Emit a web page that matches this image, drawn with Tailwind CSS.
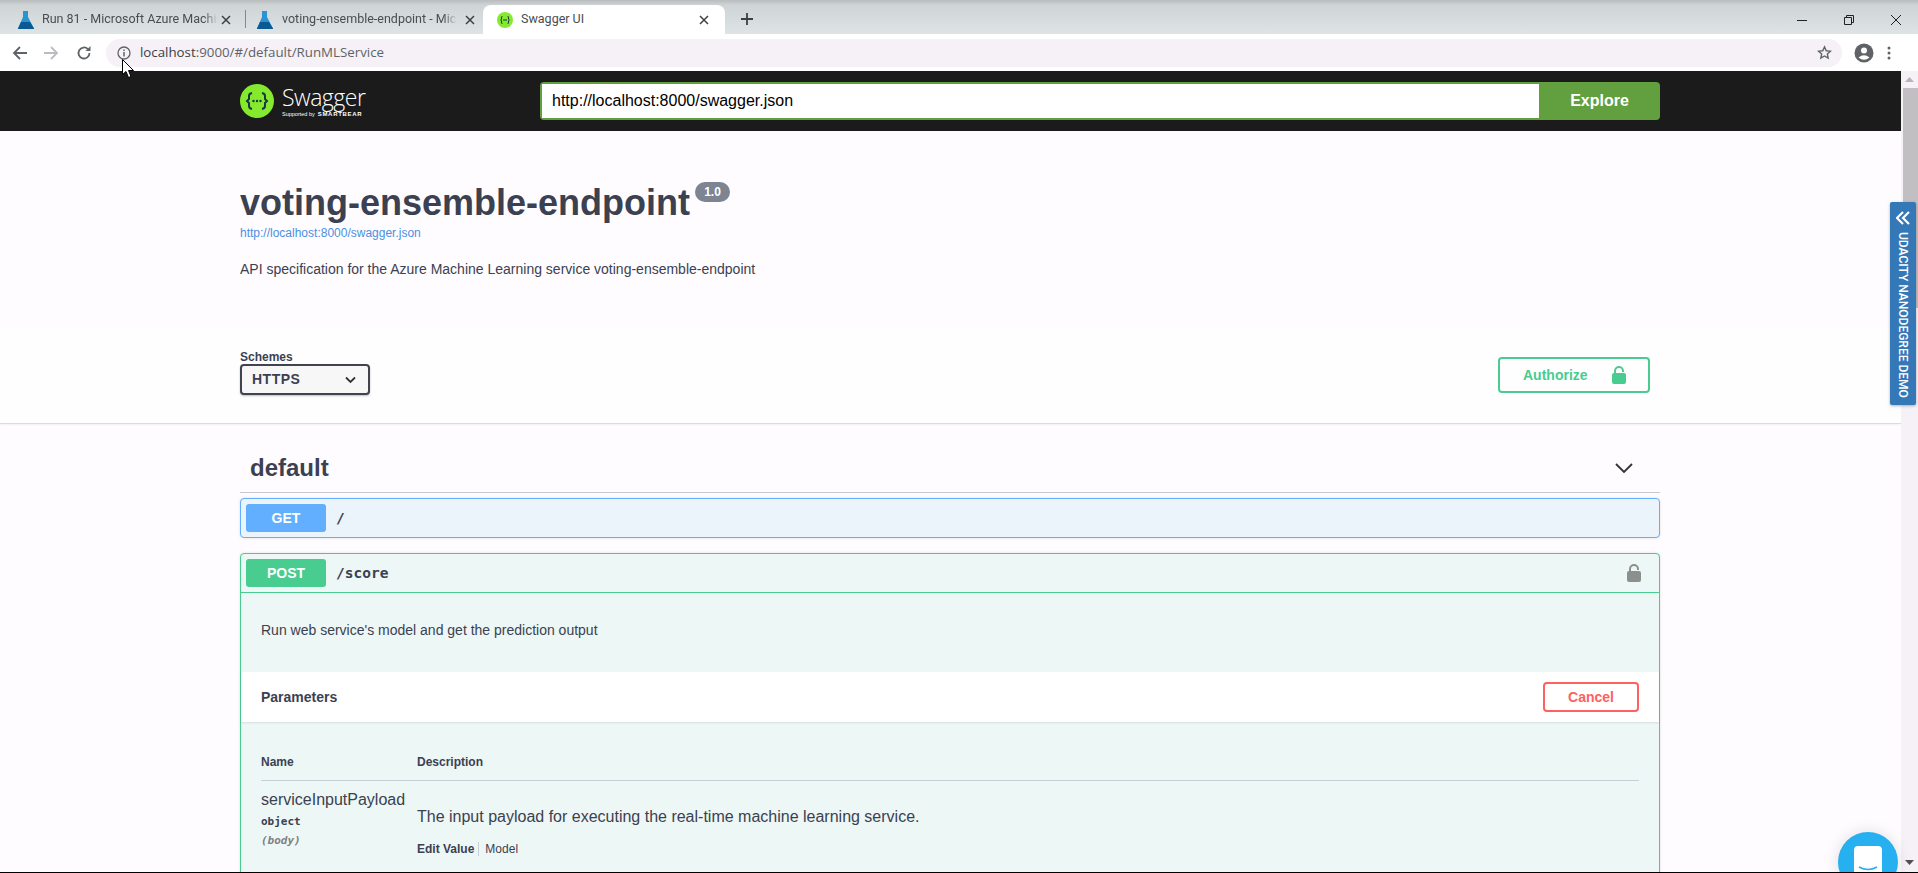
<!DOCTYPE html>
<html lang="en">

<head>
  <meta charset="UTF-8">
  <meta name="viewport" content="width=device-width, initial-scale=1.0">
  <title>Swagger UI</title>
  <script src="https://cdn.jsdelivr.net/npm/@tailwindcss/browser@4"></script>
</head>

<body class="relative h-[873px] w-[1918px] overflow-hidden bg-white font-['Liberation_Sans',Arial,sans-serif] text-[#3b4151]">

  <!-- browser tabs -->
  <div class="flex h-[34px] items-end bg-linear-to-b from-[#b9bcbd] from-0% via-[#cfd4d6] via-15% to-[#dee3e6] pl-[16px] font-['Roboto',sans-serif] text-[12.500px] text-[#4a4d51]">
    <div class="flex h-[29px] w-[229px] items-center">
      <svg class="h-[20px] w-[20px] shrink-0" viewBox="0 0 20 20"><path d="M7 1h5v6l6 11.500q.3.500-.3.500H2.300q-.6 0-.3-.5L7 7z" fill="#2a93d0"/><path d="M5 12h9l4 6.500q.2.500-.3.500H2.300q-.6 0-.3-.5z" fill="#0b5a94"/></svg>
      <span class="ml-[6px] w-[176px] whitespace-nowrap [mask-image:linear-gradient(to_right,black_92%,transparent)]">Run 81 - Microsoft Azure Machin</span>
      <svg class="ml-[3px] h-[10px] w-[10px] shrink-0" viewBox="0 0 10 10"><path d="M1 1l8 8M9 1l-8 8" stroke="#3c4043" stroke-width="1.500"/></svg>
    </div>
    <div class="mb-[6px] h-[18px] w-px bg-[#85888b]"></div>
    <div class="flex h-[29px] w-[237px] items-center pl-[9px]">
      <svg class="h-[20px] w-[20px] shrink-0" viewBox="0 0 20 20"><path d="M7 1h5v6l6 11.500q.3.500-.3.500H2.300q-.6 0-.3-.5L7 7z" fill="#2a93d0"/><path d="M5 12h9l4 6.500q.2.500-.3.500H2.300q-.6 0-.3-.5z" fill="#0b5a94"/></svg>
      <span class="ml-[7px] w-[175px] whitespace-nowrap [mask-image:linear-gradient(to_right,black_92%,transparent)]">voting-ensemble-endpoint - Mic</span>
      <svg class="ml-[8px] h-[10px] w-[10px] shrink-0" viewBox="0 0 10 10"><path d="M1 1l8 8M9 1l-8 8" stroke="#3c4043" stroke-width="1.500"/></svg>
    </div>
    <div class="flex h-[29px] w-[242px] items-center rounded-t-[8px] bg-white pl-[14px]">
      <svg class="h-[16px] w-[16px] shrink-0" viewBox="0 0 16 16"><circle cx="8" cy="8" r="8" fill="#85ea2d"/><path d="M5.500 4q-1 .5-1 2v1l-.8 1 .8 1v1q0 1.500 1 2M10.500 4q1 .5 1 2v1l.8 1-.8 1v1q0 1.500-1 2M6 8h4" fill="none" stroke="#173647" stroke-width="1"/></svg>
      <span class="ml-[8px] w-[178px] whitespace-nowrap">Swagger UI</span>
      <svg class="h-[10px] w-[10px] shrink-0" viewBox="0 0 10 10"><path d="M1 1l8 8M9 1l-8 8" stroke="#3c4043" stroke-width="1.500"/></svg>
    </div>
    <svg class="mb-[9px] ml-[16px] h-[12px] w-[12px]" viewBox="0 0 12 12"><path d="M6 0v12M0 6h12" stroke="#3c4043" stroke-width="1.800"/></svg>
    <div class="mb-[8px] ml-auto flex items-center gap-[35px] pr-[16px]">
      <svg class="h-[12px] w-[12px]" viewBox="0 0 12 12"><path d="M1 6.500h10" stroke="#222" stroke-width="1"/></svg>
      <svg class="h-[12px] w-[12px]" viewBox="0 0 12 12"><path d="M1.500 3.500h7v7h-7zM3.500 3.500v-2h7v7h-2" fill="none" stroke="#222" stroke-width="1"/></svg>
      <svg class="h-[12px] w-[12px]" viewBox="0 0 12 12"><path d="M1 1l10 10M11 1L1 11" stroke="#222" stroke-width="1"/></svg>
    </div>
  </div>

  <!-- browser toolbar -->
  <div class="flex h-[37px] items-center bg-white">
    <svg class="ml-[12px] h-[16px] w-[16px]" viewBox="0 0 16 16"><path d="M15 8H2M8 2L2 8l6 6" fill="none" stroke="#5f6368" stroke-width="1.800"/></svg>
    <svg class="ml-[15px] h-[16px] w-[16px]" viewBox="0 0 16 16"><path d="M1 8h13M8 2l6 6-6 6" fill="none" stroke="#b9bcc0" stroke-width="1.800"/></svg>
    <svg class="ml-[17px] h-[16px] w-[16px]" viewBox="0 0 16 16"><path d="M13.500 8a5.500 5.500 0 1 1-1.600-3.900" fill="none" stroke="#5f6368" stroke-width="1.800"/><path d="M14.500 1v5h-5z" fill="#5f6368"/></svg>
    <div class="ml-[14px] flex h-[28px] w-[1736px] items-center rounded-full bg-[#f5f1f6] pl-[11px] pr-[10px]">
      <svg class="h-[14px] w-[14px] shrink-0" viewBox="0 0 14 14"><circle cx="7" cy="7" r="6" fill="none" stroke="#5f6368" stroke-width="1.300"/><path d="M7 6v4.500M7 3.500v1.500" stroke="#5f6368" stroke-width="1.500"/></svg>
      <span class="ml-[9px] font-['Open_Sans',sans-serif] text-[13.300px] text-[#3d4043]">localhost<span class="text-[#5f6368]">:9000/#/default/RunMLService</span></span>
      <svg class="ml-auto h-[15px] w-[15px]" viewBox="0 0 24 24"><path d="M12 3l2.800 6.200 6.700.7-5 4.500 1.400 6.600L12 17.600 6.100 21l1.400-6.600-5-4.500 6.700-.7z" fill="none" stroke="#5f6368" stroke-width="2.200"/></svg>
    </div>
    <svg class="ml-[12px] h-[20px] w-[20px]" viewBox="0 0 20 20"><circle cx="10" cy="10" r="9.500" fill="#5f6368"/><circle cx="10" cy="7.500" r="3" fill="white"/><path d="M4.500 14.500q5.500-4.500 11 0-5.500 4.500-11 0z" fill="white"/></svg>
    <svg class="ml-[13px] h-[16px] w-[4px]" viewBox="0 0 4 16"><circle cx="2" cy="3" r="1.500" fill="#5f6368"/><circle cx="2" cy="8" r="1.500" fill="#5f6368"/><circle cx="2" cy="13" r="1.500" fill="#5f6368"/></svg>
  </div>

  <div class="flex h-[802px]">
    <!-- page -->
    <div class="h-[801px] w-[1901px] overflow-hidden bg-[#fffcff]">

      <!-- swagger topbar -->
      <div class="h-[60px] bg-[#1b1b1b]">
        <div class="ml-[240px] flex w-[1420px] items-center pt-[11px]">
          <div class="flex w-[300px] items-center">
            <svg class="h-[34px] w-[34px]" viewBox="0 0 34 34"><circle cx="17" cy="17" r="17" fill="#85ea2d"/><path d="M12 9q-3 .5-3 3v3l-2 2 2 2v3q0 2.500 3 3M22 9q3 .5 3 3v3l2 2-2 2v3q0 2.500-3 3" fill="none" stroke="#173647" stroke-width="2"/><circle cx="13.500" cy="17" r="1.200" fill="#173647"/><circle cx="17" cy="17" r="1.200" fill="#173647"/><circle cx="20.500" cy="17" r="1.200" fill="#173647"/></svg>
            <div class="ml-[8px] text-white">
              <div class="font-['Open_Sans',sans-serif] text-[23px] leading-[26px] font-light tracking-[-0.5px]">Swagger</div>
              <div class="flex items-baseline whitespace-nowrap leading-[8px]"><span class="text-[5.500px]">Supported by</span><span class="ml-[3px] text-[6px] font-bold tracking-[0.7px]">SMARTBEAR</span></div>
            </div>
          </div>
          <div class="flex h-[38px] w-[1120px] rounded-[4px] border-[2px] border-[#62a03f]">
            <div class="flex w-[997px] items-center bg-white pl-[10px] text-[16px] text-black">http://localhost:8000/swagger.json</div>
            <div class="flex flex-1 items-center justify-center bg-[#62a03f] pl-[2px] text-[16px] font-bold text-white">Explore</div>
          </div>
        </div>
      </div>

      <!-- info -->
      <div class="h-[196px]">
        <div class="ml-[240px] w-[1420px] pt-[50px]">
          <div class="flex items-start">
            <h2 class="text-[36px] leading-[44px] font-bold">voting-ensemble-endpoint</h2>
            <span class="ml-[5px] mt-[1px] flex h-[20px] w-[35px] items-center justify-center rounded-full bg-[#7d8492] text-[12px] font-bold text-white">1.0</span>
          </div>
          <div class="mt-[1px] text-[12px] leading-[14px] text-[#4990e2]">http://localhost:8000/swagger.json</div>
          <p class="mt-[21px] text-[14px] leading-[16px]">API specification for the Azure Machine Learning service voting-ensemble-endpoint</p>
        </div>
      </div>

      <!-- schemes -->
      <div class="h-[97px] border-b border-[#dcdcdc] bg-[#fffefe] shadow-[0_1px_2px_rgba(0,0,0,0.05)]">
        <div class="ml-[240px] flex w-[1420px] pt-[23px]">
          <div>
            <div class="text-[12px] leading-[14px] font-bold">Schemes</div>
            <div class="flex h-[31px] w-[130px] items-center justify-between rounded-[4px] border-[2px] border-[#41444e] bg-[#f7f7f7] pl-[10px] pr-[12px] text-[14px] font-bold tracking-[0.5px] shadow-[0_1px_2px_rgba(0,0,0,0.25)]">
              HTTPS
              <svg class="h-[8px] w-[11px]" viewBox="0 0 11 8"><path d="M1 1.500l4.500 4.500L10 1.500" fill="none" stroke="#333" stroke-width="1.800"/></svg>
            </div>
          </div>
          <div class="ml-auto mr-[10px] mt-[7px] flex h-[36px] w-[152px] items-center rounded-[4px] border-[2px] border-[#49cc90] pl-[23px] text-[14px] font-bold text-[#49cc90]">
            Authorize
            <svg class="ml-[24px] h-[18px] w-[14px]" viewBox="0 0 14 18"><path d="M3 8V5a4 4 0 0 1 8 0v1" fill="none" stroke="#49cc90" stroke-width="2"/><rect y="7" width="14" height="11" rx="2" fill="#49cc90"/></svg>
          </div>
        </div>
      </div>

      <!-- operations -->
      <div class="ml-[240px] w-[1420px]">
        <div class="flex h-[69px] items-center border-b border-[#c8c9cc] pl-[10px] pr-[26px] pt-[22px] pb-[2px]">
          <h3 class="text-[24px] font-bold">default</h3>
          <svg class="ml-auto h-[12px] w-[20px]" viewBox="0 0 20 12"><path d="M2 2l8 8 8-8" fill="none" stroke="#333" stroke-width="1.800"/></svg>
        </div>

        <div class="mt-[5px] flex h-[40px] items-center rounded-[4px] border border-[#61affe] bg-[#ebf3fb] pl-[5px] shadow-[0_0_3px_rgba(0,0,0,0.12)]">
          <span class="flex h-[28px] w-[80px] items-center justify-center rounded-[3px] bg-[#61affe] text-[14px] font-bold text-white">GET</span>
          <span class="ml-[10px] pt-[1px] font-['DejaVu_Sans_Mono',monospace] text-[14.500px] font-bold">/</span>
        </div>

        <div class="mt-[15px] rounded-[4px] border border-[#49cc90] bg-[#edf7f5] shadow-[0_0_3px_rgba(0,0,0,0.12)]">
          <div class="flex h-[39px] items-center border-b border-[#49cc90] pl-[5px] pr-[18px]">
            <span class="flex h-[28px] w-[80px] items-center justify-center rounded-[3px] bg-[#49cc90] text-[14px] font-bold text-white">POST</span>
            <span class="ml-[10px] pt-[1px] font-['DejaVu_Sans_Mono',monospace] text-[14.500px] font-bold">/score</span>
            <svg class="ml-auto h-[18px] w-[14px]" viewBox="0 0 14 18"><path d="M3 8V5a4 4 0 0 1 8 0v1" fill="none" stroke="#8c908c" stroke-width="2"/><rect y="7" width="14" height="11" rx="2" fill="#8c908c"/></svg>
          </div>
          <div class="flex h-[79px] items-start pl-[20px] pt-[29px] text-[14px] leading-[16px]">Run web service's model and get the prediction output</div>
          <div class="flex h-[50px] items-center justify-between bg-white pl-[20px] pr-[20px] shadow-[0_1px_2px_rgba(0,0,0,0.1)]">
            <span class="text-[14px] font-bold">Parameters</span>
            <span class="flex h-[30px] w-[96px] items-center justify-center rounded-[4px] border-[2px] border-[#ff6060] text-[14px] font-bold text-[#ff6060]">Cancel</span>
          </div>
          <div class="px-[20px]">
            <div class="flex h-[59px] items-end border-b border-[#c7ced4] pb-[9px] text-[12px] font-bold">
              <span class="w-[156px]">Name</span>
              <span>Description</span>
            </div>
            <div class="flex h-[140px]">
              <div class="w-[156px] pt-[10px]">
                <div class="text-[16px] leading-[18px]">serviceInputPayload</div>
                <div class="mt-[6px] font-['DejaVu_Sans_Mono',monospace] text-[11px] leading-[14px] font-bold">object</div>
                <div class="mt-[5px] font-['DejaVu_Sans_Mono',monospace] text-[11px] leading-[14px] font-bold italic text-[#7f7f7f]">(body)</div>
              </div>
              <div class="pt-[27px]">
                <div class="text-[16px] leading-[18px]">The input payload for executing the real-time machine learning service.</div>
                <div class="mt-[16px] flex items-center text-[12px] leading-[14px]">
                  <span class="border-r border-[#c7ced4] pr-[4px] font-bold">Edit Value</span>
                  <span class="pl-[6px]">Model</span>
                </div>
              </div>
            </div>
          </div>
        </div>
      </div>
    </div>

    <!-- scrollbar -->
    <div class="flex h-[801px] w-[17px] flex-col items-center bg-[#f5f1f6]">
      <svg class="mt-[6px] h-[5px] w-[9px]" viewBox="0 0 9 5"><path d="M4.500 0L9 5H0z" fill="#b5b5b5"/></svg>
      <div class="ml-[1px] mt-[6px] h-[220px] w-[15px] bg-[#c1bfc1]"></div>
      <svg class="mt-auto mb-[7px] h-[5px] w-[9px]" viewBox="0 0 9 5"><path d="M4.500 5L9 0H0z" fill="#505050"/></svg>
    </div>
  </div>

  <div class="absolute bottom-0 left-0 h-px w-full bg-black"></div>

  <!-- udacity side tab -->
  <div class="absolute left-[1890px] top-[202px] flex h-[203px] w-[26px] flex-col items-center rounded-[2px] bg-[#3478b7] pt-[9px] text-white shadow-[0_1px_3px_rgba(0,0,0,0.3)]">
    <svg class="h-[14px] w-[14px] shrink-0" viewBox="0 0 14 14"><path d="M7 1L1 7l6 6M13 1L7 7l6 6" fill="none" stroke="white" stroke-width="2.200"/></svg>
    <span class="mt-[7px] whitespace-nowrap font-['Roboto',sans-serif] text-[12px] leading-[14px] font-medium [writing-mode:vertical-rl]">UDACITY NANODEGREE DEMO</span>
  </div>

  <!-- chat bubble -->
  <div class="absolute left-[1838px] top-[832px] h-[60px] w-[60px] rounded-full bg-[#27b0ef] shadow-[0_0_16px_rgba(0,0,0,0.12)]">
    <div class="mx-auto mt-[14px] h-[34px] w-[28px] rounded-[4px] bg-white">
      <svg class="mx-auto block h-[34px] w-[22px]" viewBox="0 0 22 34"><path d="M2 21q9 5 18 0" fill="none" stroke="#27b0ef" stroke-width="1.500"/></svg>
    </div>
  </div>
  <div class="absolute bottom-0 left-[1838px] h-px w-[60px] bg-black"></div>

  <!-- mouse cursor -->
  <svg class="absolute left-[122px] top-[59px] h-[19px] w-[12px]" viewBox="0 0 12 19"><path d="M.5.500v15l3.500-3 2.500 6 2.500-1-2.500-6h5z" fill="white" stroke="black" stroke-width="1"/></svg>

</body>

</html>
